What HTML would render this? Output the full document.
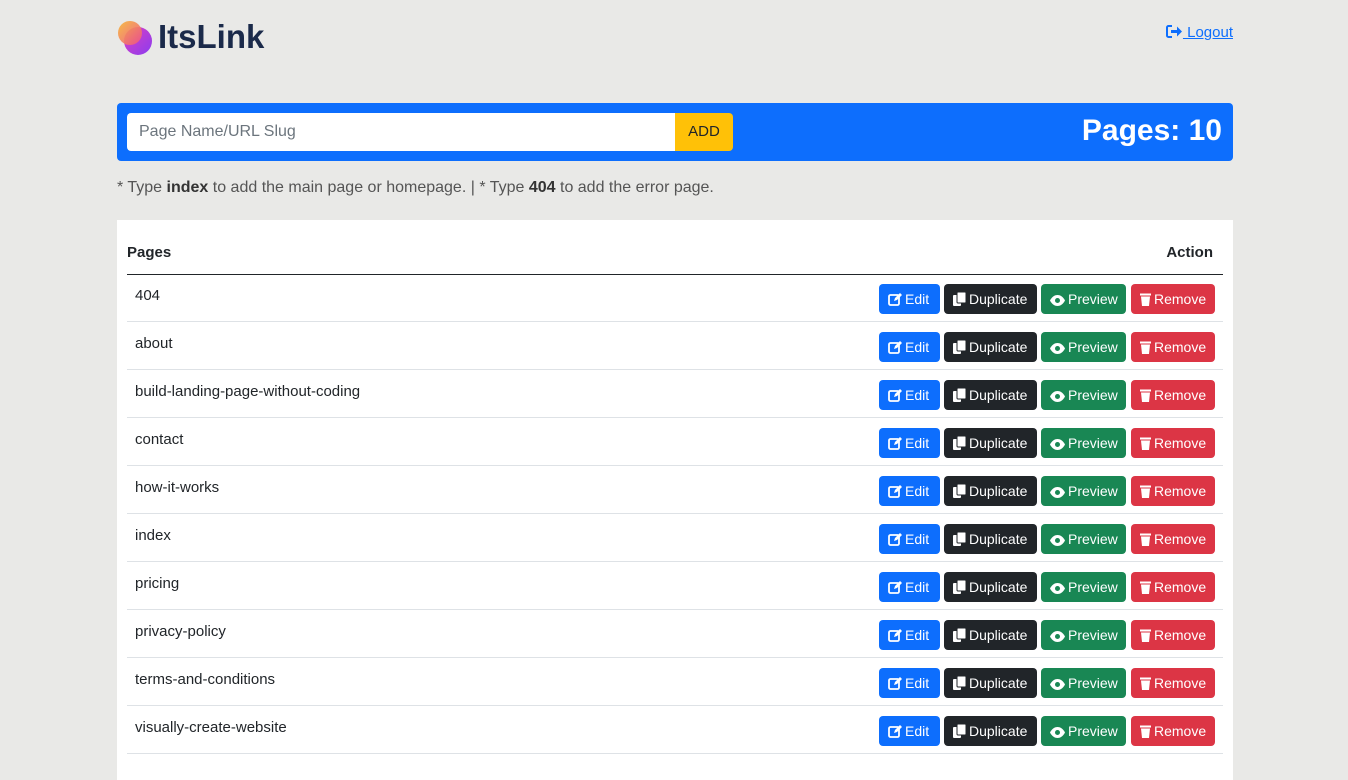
<!DOCTYPE html><html><head><style>
body{margin:0;background:#e9e9e7;font-family:"Liberation Sans",sans-serif;color:#212529;}
.logo{position:absolute;left:117px;top:18px;height:40px}
.logo .t{position:absolute;left:41px;top:0;font-size:33px;font-weight:bold;color:#1b2a4a;letter-spacing:0px}
.logout{position:absolute;right:115px;top:24px;color:#0d6efd;font-size:15px;text-decoration:underline}
.bar{position:absolute;left:117px;top:103px;width:1116px;height:58px;background:#0d6efd;border-radius:4px}
.inp{position:absolute;left:10px;top:10px;width:548px;height:38px;background:#fff;border-radius:4px 0 0 4px;box-sizing:border-box;padding:10px 12px;color:#6c757d;font-size:16px}
.add{position:absolute;left:558px;top:10px;width:58px;height:38px;background:#ffc107;border-radius:0 4px 4px 0;font-size:15px;line-height:38px;text-align:center;color:#212529}
.cnt{position:absolute;right:11px;top:11px;color:#fff;font-size:30px;font-weight:bold}
.note{position:absolute;left:117px;top:179px;font-size:16px;color:#555}
.card{position:absolute;left:117px;top:220px;width:1116px;height:560px;background:#fff}
.hd{position:absolute;left:10px;top:24px;width:1096px;height:30px;border-bottom:1px solid #212529;font-weight:bold;font-size:15px}
.row{position:absolute;left:10px;width:1096px;height:47px;border-bottom:1px solid #dee2e6;font-size:15px}
.row .n{position:absolute;left:8px;top:13px}
.b{position:absolute;top:10px;height:30px;border-radius:4px;color:#fff;font-size:14px;line-height:30px;box-sizing:border-box;padding-left:9px;white-space:nowrap}
.b svg{vertical-align:-2px;margin-right:3px}
</style></head><body>
<div class="logo"><svg width="36" height="38" style="position:absolute;left:0;top:2px"><defs><linearGradient id="g1" x1="0" y1="0" x2="1" y2="1"><stop offset="0" stop-color="#f7b733"/><stop offset="1" stop-color="#f0508a"/></linearGradient><linearGradient id="g2" x1="0" y1="0" x2="1" y2="1"><stop offset="0" stop-color="#e040c0"/><stop offset="1" stop-color="#8a3cf0"/></linearGradient></defs><circle cx="21" cy="21" r="14" fill="url(#g2)"/><circle cx="13" cy="13" r="12" fill="url(#g1)" opacity=".9"/></svg><span class="t">ItsLink</span></div>
<div class="logout"><svg width="17" height="13" viewBox="0 0 17 13" style="vertical-align:-1px"><path d="M6 1H2.5A1.5 1.5 0 0 0 1 2.5v8A1.5 1.5 0 0 0 2.5 12H6" fill="none" stroke="#0d6efd" stroke-width="2"/><path d="M5 5h6V1.5l5 5-5 5V8H5z" fill="#0d6efd"/></svg> Logout</div>
<div class="bar"><div class="inp">Page Name/URL Slug</div><div class="add">ADD</div><div class="cnt">Pages: 10</div></div>
<div class="note">* Type <b style="color:#333">index</b> to add the main page or homepage. | * Type <b style="color:#333">404</b> to add the error page.</div>
<div class="card"><div class="hd"><span style="position:absolute;left:0;top:0">Pages</span><span style="position:absolute;right:10px;top:0">Action</span></div>
<div id="rows"></div></div>
<script>
var n=["404","about","build-landing-page-without-coding","contact","how-it-works","index","pricing","privacy-policy","terms-and-conditions","visually-create-website"];
var h="";
var ed='<svg width="14" height="13" viewBox="0 0 14 13"><rect x="1" y="2" width="10" height="10" rx="1.5" fill="none" stroke="#fff" stroke-width="1.8"/><path d="M6 8l1-3 5-5 2 2-5 5z" fill="#fff"/></svg>';
var du='<svg width="13" height="14" viewBox="0 0 13 14"><rect x="0" y="3" width="8" height="11" rx="1" fill="#fff"/><rect x="4" y="0" width="9" height="11" rx="1" fill="#fff" stroke="#212529" stroke-width="1"/></svg>';
var pr='<svg width="15" height="11" viewBox="0 0 15 11"><path d="M0 5.5C2 1.5 5 0 7.5 0S13 1.5 15 5.5C13 9.5 10 11 7.5 11S2 9.5 0 5.5z" fill="#fff"/><circle cx="7.5" cy="5.5" r="2.5" fill="#198754"/></svg>';
var rm='<svg width="11" height="13" viewBox="0 0 11 13"><rect x="0" y="0.5" width="11" height="2" fill="#fff"/><path d="M1 3.5h9l-1 9.5H2z" fill="#fff"/></svg>';
for(var i=0;i<n.length;i++){var t=54+i*48;
h+='<div class="row" style="top:'+t+'px"><span class="n">'+n[i]+'</span>'+
'<div class="b" style="left:752px;width:61px;background:#0d6efd">'+ed+'Edit</div>'+
'<div class="b" style="left:817px;width:93px;background:#212529">'+du+'Duplicate</div>'+
'<div class="b" style="left:914px;width:85px;background:#198754">'+pr+'Preview</div>'+
'<div class="b" style="left:1004px;width:84px;background:#dc3545">'+rm+'Remove</div></div>';}
document.getElementById("rows").innerHTML=h;
</script>
</body></html>
